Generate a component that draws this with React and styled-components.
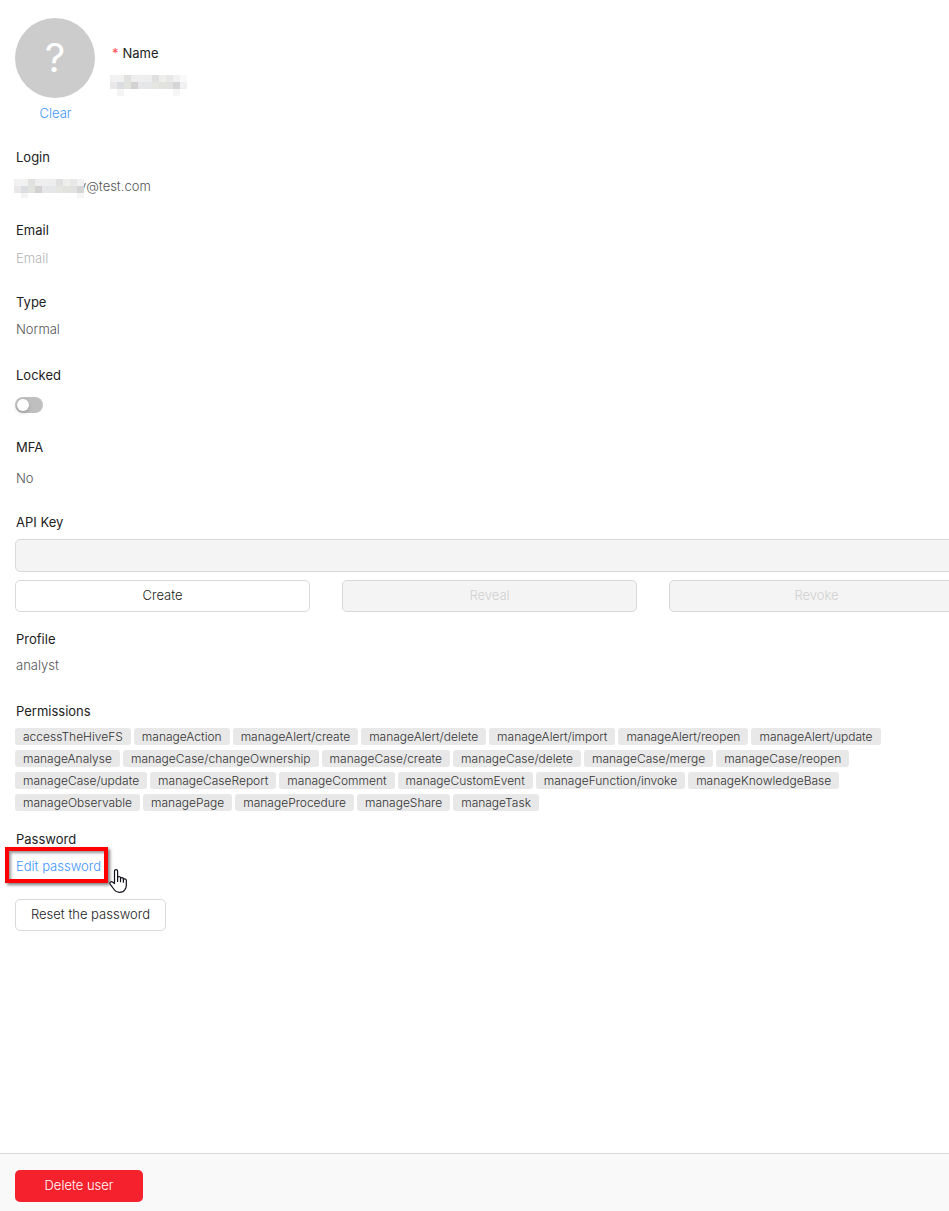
import React from "react";
import styled, { createGlobalStyle } from "styled-components";

const Global = createGlobalStyle`
  *, *::before, *::after { box-sizing: border-box; }
  html, body { margin: 0; background: #fff; }
  body { overflow-x: hidden; }
  body, button, input { font: 300 13px/20px Inter, "Open Sans", sans-serif; color: #222; }
`;

const Page = styled.div`
  min-height: 100vh;
  display: flex;
  flex-direction: column;
  overflow: hidden;
`;

/* The form runs under the right edge of the drawer by the width of its gutter. */
const Form = styled.main`
  flex: 1;
  margin: 18px -15px 0 15px;
`;

const Header = styled.header`
  display: flex;
  gap: 15px;
  margin-bottom: 24px;
`;

const AvatarColumn = styled.div`
  width: 80px;
  display: flex;
  flex-direction: column;
  align-items: center;
  gap: 5px;
`;

const Avatar = styled.div`
  width: 80px;
  height: 80px;
  border-radius: 50%;
  background: #ccc;
  color: #fff;
  font-size: 40px;
  font-weight: 400;
  line-height: 80px;
  text-align: center;
`;

const Link = styled.a`
  padding-left: 1px;
  color: #4096ff;
  text-decoration: none;
`;

const NameField = styled.div`
  padding-top: 25px;
`;

const Required = styled.span`
  color: #ff4d4f;
  padding-right: 4px;
`;

const Field = styled.section`
  margin-bottom: ${(p) => p.$after || 24}px;
`;

const Label = styled.label`
  display: block;
  width: max-content;
  padding-left: ${(p) => p.$indent || 1}px;
  font-weight: 400;
  margin-bottom: ${(p) => p.$gap || 8}px;
`;

const Value = styled.div`
  display: flex;
  padding-left: 1px;
  color: #555;
`;

const Mosaic = styled.svg`
  display: block;
  position: relative;
`;

const LoginMask = styled(Mosaic)`
  margin: 3px -5px -4px -2px;
`;

const PlainInput = styled.input`
  display: block;
  width: 300px;
  height: 20px;
  padding: 0 0 0 1px;
  border: 0;
  background: none;
  &::placeholder { color: #b4b4b4; opacity: 1; }
`;

const Switch = styled.input`
  appearance: none;
  display: block;
  width: 28px;
  height: 16px;
  margin: 0;
  border-radius: 8px;
  background: #bfbfbf;
  &::before {
    content: "";
    display: block;
    width: 12px;
    height: 12px;
    margin: 2px;
    border-radius: 50%;
    background: #fff;
    box-shadow: 0 2px 4px rgba(0, 35, 11, 0.2);
  }
`;

const KeyInput = styled.input`
  display: block;
  width: 100%;
  height: 33px;
  border: 1px solid #d9d9d9;
  border-radius: 5px;
  background: #f4f4f4;
`;

const KeyActions = styled.div`
  display: grid;
  grid-template-columns: repeat(3, 1fr);
  gap: 32px;
  margin-top: 8px;
`;

const Button = styled.button`
  height: 32px;
  padding: 0 15px 2px;
  border: 1px solid #d9d9d9;
  border-radius: 5px;
  background: #fff;
  &:disabled { background: #f4f4f4; color: #d0d0d0; }
`;

const Tags = styled.ul`
  display: flex;
  flex-wrap: wrap;
  gap: 5px 3px;
  max-width: 900px;
  margin: 0;
  padding: 0;
  list-style: none;
`;

const Tag = styled.li`
  padding: 0 8px;
  border-radius: 3px;
  background: #e8e8e8;
  color: #333;
  font-size: 12px;
  line-height: 17px;
`;

const EditRow = styled.div`
  position: relative;
  width: max-content;
  margin-bottom: 23px;
`;

const Highlight = styled.span`
  position: absolute;
  inset: -9px -7px -7px -10px;
  border: 4px solid #fe0000;
  box-shadow: 2px 2px 3px rgba(0, 0, 0, 0.5), inset 2px 2px 3px rgba(0, 0, 0, 0.4);
  pointer-events: none;
`;

const Pointer = styled.svg`
  position: absolute;
  left: 94px;
  top: 13px;
  pointer-events: none;
`;

const Footer = styled.footer`
  padding: 16px 15px 9px;
  border-top: 1px solid #d9d9d9;
  background: #f9f9f9;
`;

const DeleteButton = styled(Button)`
  width: 128px;
  border: 0;
  background: #f5222d;
  color: #fff;
`;

const permissions = [
  "accessTheHiveFS", "manageAction", "manageAlert/create", "manageAlert/delete",
  "manageAlert/import", "manageAlert/reopen", "manageAlert/update", "manageAnalyse",
  "manageCase/changeOwnership", "manageCase/create", "manageCase/delete",
  "manageCase/merge", "manageCase/reopen", "manageCase/update", "manageCaseReport",
  "manageComment", "manageCustomEvent", "manageFunction/invoke", "manageKnowledgeBase",
  "manageObservable", "managePage", "manageProcedure", "manageShare", "manageTask",
];

const maskRows = [
  ["#f2f1f1", "#f1f1f0", "#e0e2e0", "#eeeeef", "#eeeeef", "#ededee", "#e0e0e1", "#eeeeec", "#e8e8e9", "#f0f1f3", "#f9f9fa"],
  ["#e9e7e8", "#dcdde0", "#e2e2de", "#d3d1d2", "#e6e7e9", "#e5e6e8", "#e5e5e1", "#e2e2df", "#e1e1df", "#d5d5d6", "#f1f1f3"],
  [null, "#f4f4f5", null, null, null, null, null, null, null, "#f6f6f7", null],
];

const maskCells = (columns) =>
  maskRows.flatMap((row, y) =>
    row.slice(0, columns).map((fill, x) =>
      fill ? <rect key={`${x}-${y}`} x={x * 7} y={y * 7} width="7" height="7" fill={fill} /> : null
    )
  );

export default function App() {
  return (
    <Page>
      <Global />
      <Form>
        <Header>
          <AvatarColumn>
            <Avatar>?</Avatar>
            <Link href="#clear">Clear</Link>
          </AvatarColumn>
          <NameField>
            <Label as="div" $gap={12} $indent={2}><Required>*</Required>Name</Label>
            <Mosaic width="77" height="21" shapeRendering="crispEdges" aria-hidden="true">{maskCells(11)}</Mosaic>
          </NameField>
        </Header>
        <Field>
          <Label as="div" $gap={9}>Login</Label>
          <Value>
            <LoginMask width="70" height="19" shapeRendering="crispEdges" aria-hidden="true">{maskCells(10)}</LoginMask>
            y@test.com
          </Value>
        </Field>
        <Field>
          <Label htmlFor="email">Email</Label>
          <PlainInput id="email" type="email" placeholder="Email" />
        </Field>
        <Field $after={26}>
          <Label as="div" $gap={7}>Type</Label>
          <Value>Normal</Value>
        </Field>
        <Field>
          <Label htmlFor="locked" $gap={12}>Locked</Label>
          <Switch id="locked" type="checkbox" role="switch" />
        </Field>
        <Field>
          <Label as="div" $gap={11}>MFA</Label>
          <Value>No</Value>
        </Field>
        <Field $after={17}>
          <Label htmlFor="key" $gap={7}>API Key</Label>
          <KeyInput id="key" disabled />
          <KeyActions>
            <Button>Create</Button>
            <Button disabled>Reveal</Button>
            <Button disabled>Revoke</Button>
          </KeyActions>
        </Field>
        <Field $after={26}>
          <Label as="div" $gap={6}>Profile</Label>
          <Value>analyst</Value>
        </Field>
        <Field $after={18}>
          <Label as="div" $gap={7}>Permissions</Label>
          <Tags>{permissions.map((p) => <Tag key={p}>{p}</Tag>)}</Tags>
        </Field>
        <Field>
          <Label as="div" $gap={7}>Password</Label>
          <EditRow>
            <Link href="#edit">Edit password</Link>
            <Highlight />
            <Pointer width="19" height="24" viewBox="0 0 19 24" aria-hidden="true">
              <path
                d="M5.5 14.5V2.3c0-2.2 3.1-2.2 3.1 0v6.400c0-1.600 2.900-1.600 2.900.2v.6c.2-1.400 2.900-1.300 2.900.4v.7c.3-1.200 2.900-1.100 2.900.7v5.200c0 2-.6 3-1.400 4.200-1 1.600-2.400 2.600-5.400 2.600-2.700 0-4.200-1-5.400-2.800L1.300 15.400c-1.300-2.200 1.200-3.600 2.500-2.200z"
                fill="#fff"
                stroke="#10101c"
                strokeWidth="1.2"
                strokeLinejoin="round"
              />
              <path d="M8.600 8.500v4M11.500 9.200v3.500M14.400 10.200v3" fill="none" stroke="#10101c" strokeWidth="1.2" strokeLinecap="round" />
            </Pointer>
          </EditRow>
          <Button>Reset the password</Button>
        </Field>
      </Form>
      <Footer><DeleteButton>Delete user</DeleteButton></Footer>
    </Page>
  );
}
